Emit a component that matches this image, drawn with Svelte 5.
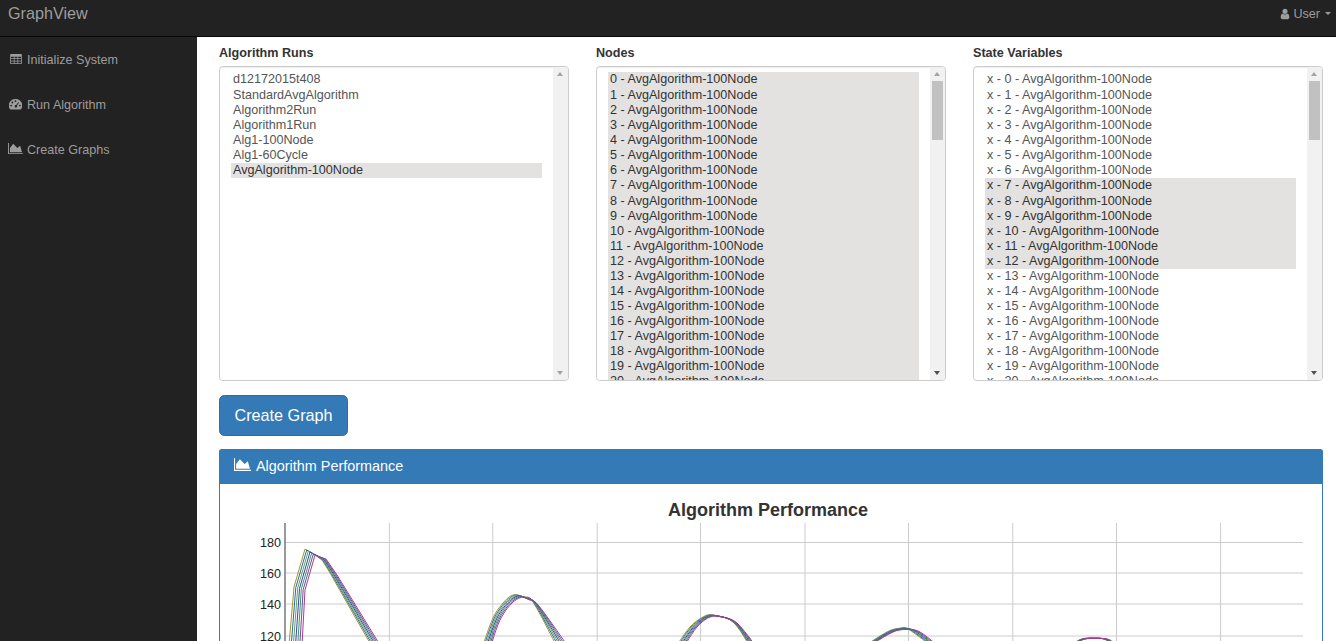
<script lang="ts">
  const nodeName = "AvgAlgorithm-100Node";

  const runs = [
    "d12172015t408",
    "StandardAvgAlgorithm",
    "Algorithm2Run",
    "Algorithm1Run",
    "Alg1-100Node",
    "Alg1-60Cycle",
    "AvgAlgorithm-100Node",
  ];
  const nodes = Array.from({ length: 21 }, (_, i) => `${i} - ${nodeName}`);
  const stateVars = Array.from({ length: 21 }, (_, i) => `x - ${i} - ${nodeName}`);

  const lists = [
    { label: "Algorithm Runs", items: runs, isSelected: (i: number) => i === 6, thumb: false },
    { label: "Nodes", items: nodes, isSelected: () => true, thumb: true },
    { label: "State Variables", items: stateVars, isSelected: (i: number) => i >= 7 && i <= 12, thumb: true },
  ];

  // chart is drawn in page coordinates through the viewBox
  const hLines = [542.5, 573, 604, 636];
  const vLines = [389.4, 492.8, 597.2, 700.5, 805, 908.5, 1012.8, 1116.5, 1220.6];
  const yTicks = [
    { label: "180", y: 542 },
    { label: "160", y: 573 },
    { label: "140", y: 604 },
    { label: "120", y: 636 },
  ];

  // outer curves of the band for each arch, the ones between are interpolated
  const arches = [
    {
      smooth: false,
      a: [[289, 645], [294, 587], [305, 549], [315, 555], [322, 560], [330, 573], [371, 645]],
      b: [[302, 645], [305, 590], [315, 555], [320, 557], [326, 559], [337, 575], [380, 645]],
    },
    {
      smooth: true,
      a: [[483, 645], [493, 618], [503, 603], [513, 595], [523, 597], [533, 602], [556, 645]],
      b: [[491, 645], [500, 620], [512, 603], [523, 597], [530, 600], [539, 606], [567, 645]],
    },
    {
      smooth: true,
      a: [[677, 645], [690, 627], [703, 617], [713, 615], [733, 622], [749, 645]],
      b: [[685, 645], [697, 627], [710, 617], [722, 617], [737, 623], [755, 645]],
    },
    {
      smooth: true,
      a: [[866, 645], [887, 632], [898, 628.5], [908, 629], [930, 645]],
      b: [[871, 645], [893, 632], [907, 629.5], [920, 632], [937, 645]],
    },
    {
      smooth: true,
      a: [[1068, 650], [1079, 640], [1093, 638], [1106, 640], [1115, 650]],
      b: [[1071, 650], [1082, 640], [1096, 638.5], [1110, 640], [1119, 650]],
    },
  ];
  const colors = ["#a8932f", "#2b6ca3", "#57a85f", "#4c3a9e", "#2f9a6d", "#6a4fa0", "#a83c92"];

  // catmull-rom sampling so the lower arches don't look like polygons
  const sample = (pts: number[][]) => {
    const out: number[][] = [];
    for (let i = 0; i < pts.length - 1; i++) {
      const p0 = pts[Math.max(i - 1, 0)];
      const p1 = pts[i];
      const p2 = pts[i + 1];
      const p3 = pts[Math.min(i + 2, pts.length - 1)];
      for (let k = 0; k < 5; k++) {
        const t = k / 5;
        const f = (d: number) =>
          0.5 *
          (2 * p1[d] +
            (p2[d] - p0[d]) * t +
            (2 * p0[d] - 5 * p1[d] + 4 * p2[d] - p3[d]) * t * t +
            (3 * p1[d] - p0[d] - 3 * p2[d] + p3[d]) * t * t * t);
        out.push([f(0), f(1)]);
      }
    }
    out.push(pts[pts.length - 1]);
    return out;
  };

  const series = colors.map((color, s) => {
    const t = s / (colors.length - 1);
    const d = arches
      .map((arch) => {
        const mixed = arch.a.map((p, i) => [
          p[0] + (arch.b[i][0] - p[0]) * t,
          p[1] + (arch.b[i][1] - p[1]) * t,
        ]);
        const pts = arch.smooth ? sample(mixed) : mixed;
        return "M" + pts.map((p) => `${p[0].toFixed(1)} ${p[1].toFixed(1)}`).join("L");
      })
      .join("");
    return { color, d };
  });
</script>

{#snippet areaIcon()}
  <svg class="icon area" viewBox="0 0 2048 1792" aria-hidden="true">
    <path d="M2048 1536v128h-2048v-1536h128v1408h1920zm-384-1024l256 896h-1664v-576l448-576 576 576z" fill="currentColor" />
  </svg>
{/snippet}

<div class="page">
  <header class="navbar">
    <span class="brand">GraphView</span>
    <span class="user">
      <svg class="icon user-icon" viewBox="0 0 1792 1792" aria-hidden="true">
        <path
          d="M1536 1399q0 109-62.5 187t-150.5 78h-854q-88 0-150.5-78t-62.5-187q0-85 8.5-160.5t31.5-151.5 58.5-130 94-88.5 134.5-34.5q131 128 313 128t313-128q76 0 134.5 34.5t94 88.5 58.5 130 31.5 151.5 8.5 160.5zm-256-887q0 159-112.5 271.5t-271.5 112.5-271.5-112.5-112.5-271.5 112.5-271.5 271.5-112.5 271.5 112.5 112.5 271.5z"
          fill="currentColor"
        />
      </svg>
      User
      <span class="caret"></span>
    </span>
  </header>

  <div class="shell">
    <nav class="sidebar">
      <a href="#init">
        <span class="slot">
          <svg class="icon table" viewBox="0 0 14 12" aria-hidden="true">
            <path
              fill="currentColor"
              fill-rule="evenodd"
              d="M1 0h12a1 1 0 0 1 1 1v10a1 1 0 0 1-1 1H1a1 1 0 0 1-1-1V1a1 1 0 0 1 1-1zM1 3.2v2h3.4v-2zm4.3 0v2h3.4v-2zm4.3 0v2H13v-2zM1 6.1v2h3.4v-2zm4.3 0v2h3.4v-2zm4.3 0v2H13v-2zM1 9v2h3.4V9zm4.3 0v2h3.4V9zm4.3 0v2H13V9z"
            />
          </svg>
        </span>
        Initialize System
      </a>
      <a href="#run">
        <span class="slot">
          <svg class="icon gauge" viewBox="0 0 14 12" aria-hidden="true">
            <path
              fill="currentColor"
              fill-rule="evenodd"
              d="M7 0a7 7 0 0 1 6.1 10.9 1 1 0 0 1-.8.5H1.7a1 1 0 0 1-.8-.5A7 7 0 0 1 7 0zM7 1.3a1 1 0 1 0 0 2 1 1 0 0 0 0-2zM3.6 2.8a1 1 0 1 0 0 2 1 1 0 0 0 0-2zM2.2 6.2a1 1 0 1 0 0 2 1 1 0 0 0 0-2zM11.8 6.2a1 1 0 1 0 0 2 1 1 0 0 0 0-2zM10 3.6 7.6 6.7a1.3 1.3 0 1 0 .9.6L10.7 4z"
            />
          </svg>
        </span>
        Run Algorithm
      </a>
      <a href="#graphs">
        <span class="slot">{@render areaIcon()}</span>
        Create Graphs
      </a>
    </nav>

    <main class="content">
      <div class="pickers">
        {#each lists as list}
          <div class="picker">
            <div class="picker-label">{list.label}</div>
            <div class="listbox" role="listbox" aria-multiselectable="true" aria-label={list.label}>
              <div class="rows">
                {#each list.items as item, i}
                  <div class="row" class:selected={list.isSelected(i)}>{item}</div>
                {/each}
              </div>
              <div class="track">
                <span class="arrow up" class:idle={!list.thumb}></span>
                {#if list.thumb}<span class="thumb"></span>{/if}
                <span class="arrow down" class:idle={!list.thumb}></span>
              </div>
            </div>
          </div>
        {/each}
      </div>

      <button class="create" type="button">Create Graph</button>

      <section class="panel">
        <div class="panel-heading">
          {@render areaIcon()}
          Algorithm Performance
        </div>
        <svg class="chart" viewBox="220 484 1102 300">
          <text class="chart-title" x="768" y="516" text-anchor="middle">Algorithm Performance</text>
          {#each hLines as y}
            <line x1="285" x2="1303" y1={y} y2={y} class="grid" />
          {/each}
          {#each vLines as x}
            <line x1={x} x2={x} y1="523" y2="700" class="grid" />
          {/each}
          <line x1="285" x2="285" y1="523" y2="700" class="axis" />
          {#each yTicks as tick}
            <text class="tick" x="281" y={tick.y + 4.5} text-anchor="end">{tick.label}</text>
          {/each}
          {#each series as s}
            <path d={s.d} fill="none" stroke={s.color} stroke-width="1" />
          {/each}
        </svg>
      </section>
    </main>
  </div>
</div>

<style>
  :global(body) {
    font-family: "Liberation Sans", Arial, sans-serif;
    font-size: 12.6px;
    color: #333;
    background: #fff;
    overflow: hidden;
  }

  .page {
    height: 641px;
    display: flex;
    flex-direction: column;
    overflow: hidden;
  }

  .navbar {
    flex: none;
    display: flex;
    align-items: center;
    justify-content: space-between;
    padding: 0 5px 9px 8px;
    box-sizing: border-box;
    height: 37px;
    background: #222;
    border-bottom: 1px solid #080808;
    color: #9d9d9d;
  }

  .brand {
    font-size: 16.2px;
  }

  .user {
    display: flex;
    align-items: center;
    gap: 2px;
  }

  .user-icon {
    width: 12px;
    height: 12px;
  }

  .caret {
    width: 0;
    height: 0;
    margin-left: 3px;
    border-top: 3.6px solid currentColor;
    border-left: 3.6px solid transparent;
    border-right: 3.6px solid transparent;
  }

  .shell {
    flex: 1;
    display: flex;
    min-height: 0;
  }

  .sidebar {
    flex: none;
    width: 197px;
    background: #222;
    display: flex;
    flex-direction: column;
  }

  .sidebar a {
    display: flex;
    align-items: center;
    gap: 4px;
    height: 45px;
    padding-left: 8px;
    color: #9d9d9d;
    text-decoration: none;
  }

  .slot {
    flex: none;
    width: 15px;
    display: flex;
    justify-content: center;
  }

  .icon {
    flex: none;
    display: block;
  }

  .icon.table {
    width: 12px;
    height: 10px;
    margin-top: -2px;
    margin-left: 1px;
  }

  .icon.gauge {
    width: 13px;
    height: 11px;
    margin-top: -1px;
  }

  .icon.area {
    width: 15px;
    height: 13px;
    margin-top: -2px;
  }

  .content {
    flex: 1;
    min-width: 0;
    padding: 9px 13px 0 22px;
  }

  .pickers {
    display: grid;
    grid-template-columns: repeat(3, 1fr);
    gap: 27px;
  }

  .picker-label {
    font-weight: 700;
    height: 15px;
    line-height: 15px;
    margin-bottom: 5px;
  }

  .listbox {
    display: flex;
    height: 315px;
    box-sizing: border-box;
    overflow: hidden;
    color: #555;
    background: #fff;
    border: 1px solid #ccc;
    border-radius: 3.6px;
    box-shadow: inset 0 1px 1px rgba(0, 0, 0, 0.075);
  }

  .rows {
    flex: 1;
    min-width: 0;
    padding: 5px 11px 0;
    overflow: hidden;
  }

  .row {
    height: 15.08px;
    line-height: 15.08px;
    padding: 0 2px;
    white-space: nowrap;
  }

  .row:first-child {
    height: 16px;
    line-height: 15px;
  }

  .row.selected {
    background: #e3e2e0;
    color: #333;
  }

  .track {
    flex: none;
    width: 15px;
    position: relative;
    background: #f1f1f1;
  }

  .arrow {
    position: absolute;
    left: 4px;
    width: 0;
    height: 0;
    border-left: 3.5px solid transparent;
    border-right: 3.5px solid transparent;
  }

  .arrow.up {
    top: 5px;
    border-bottom: 4px solid #a3a3a3;
  }

  .arrow.down {
    bottom: 5px;
    border-top: 4px solid #505050;
  }

  .arrow.down.idle {
    border-top-color: #a3a3a3;
  }

  .thumb {
    position: absolute;
    top: 14px;
    left: 2px;
    width: 11px;
    height: 59px;
    background: #c1c1c1;
  }

  .create {
    display: block;
    margin-top: 14px;
    width: 129px;
    height: 41px;
    padding: 0;
    font: 16.2px "Liberation Sans", Arial, sans-serif;
    color: #fff;
    background: #337ab7;
    border: 1px solid #2e6da4;
    border-radius: 5.4px;
  }

  .panel {
    margin-top: 13px;
    border: 1px solid #337ab7;
    border-radius: 3.6px;
    background: #fff;
  }

  .panel-heading {
    display: flex;
    align-items: center;
    gap: 5px;
    height: 35px;
    box-sizing: border-box;
    padding: 0 0 2px 15px;
    margin: -1px -1px 0;
    border-radius: 3px 3px 0 0;
    background: #337ab7;
    color: #fff;
    font-size: 14.4px;
  }

  .panel-heading .icon.area {
    width: 17px;
    height: 15px;
  }

  .chart {
    display: block;
    width: 1102px;
    height: 300px;
  }

  .chart-title {
    font-size: 18px;
    font-weight: 700;
    fill: #333;
  }

  .tick {
    font-size: 12.6px;
    fill: #222;
  }

  .grid {
    stroke: #ccc;
    stroke-width: 1;
  }

  .axis {
    stroke: #999;
    stroke-width: 2;
  }
</style>
